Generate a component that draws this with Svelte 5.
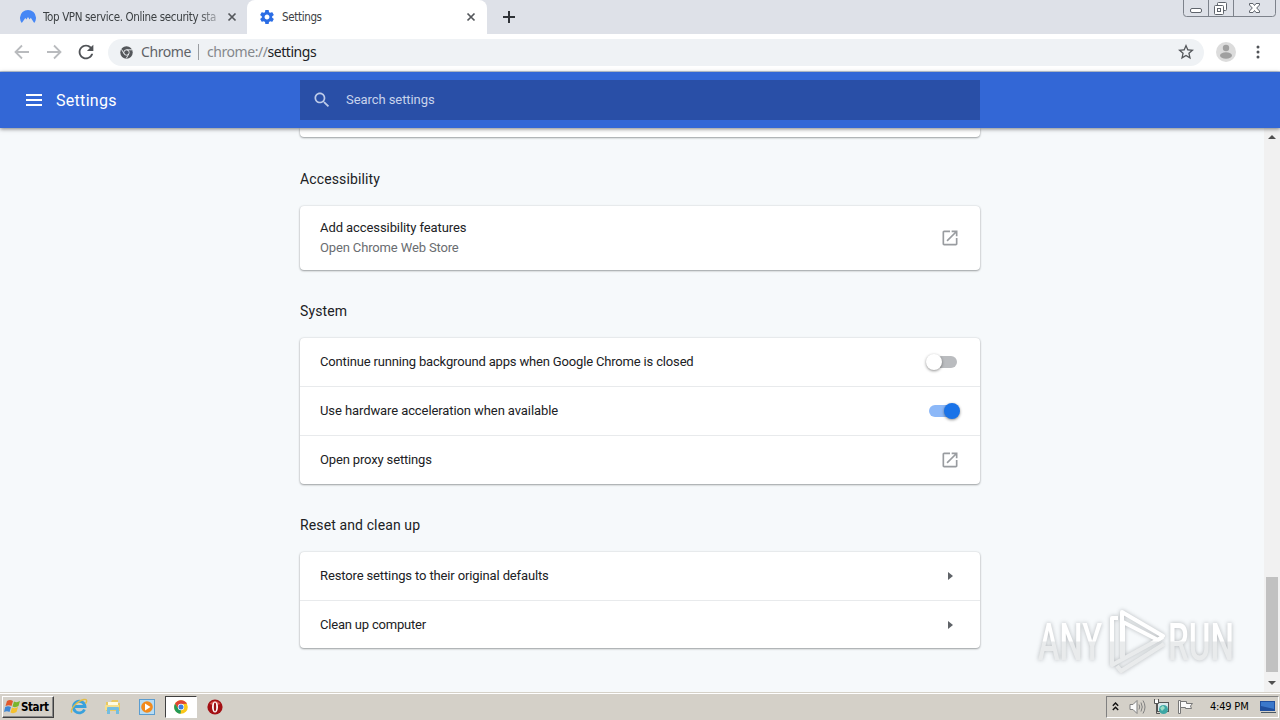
<script lang="ts">
	type Row = { label: string; sub?: string; tracking: number; control: 'link' | 'arrow' | 'off' | 'on' };
	type Section = { title: string; rows: Row[] };

	const sections: Section[] = [
		{
			title: 'Accessibility',
			rows: [
				{
					label: 'Add accessibility features',
					sub: 'Open Chrome Web Store',
					tracking: -0.08,
					control: 'link'
				}
			]
		},
		{
			title: 'System',
			rows: [
				{
					label: 'Continue running background apps when Google Chrome is closed',
					tracking: -0.165,
					control: 'off'
				},
				{ label: 'Use hardware acceleration when available', tracking: -0.09, control: 'on' },
				{ label: 'Open proxy settings', tracking: -0.15, control: 'link' }
			]
		},
		{
			title: 'Reset and clean up',
			rows: [
				{ label: 'Restore settings to their original defaults', tracking: -0.13, control: 'arrow' },
				{ label: 'Clean up computer', tracking: -0.2, control: 'arrow' }
			]
		}
	];
</script>

{#snippet closeIcon()}
	<svg class="close" width="10" height="10" viewBox="0 0 10 10">
		<path d="M1.5 1.5 8.5 8.5M8.5 1.5 1.5 8.5" stroke="#54575b" stroke-width="1.7" />
	</svg>
{/snippet}

<div class="screen">
	<div class="tabstrip">
		<div class="tab first">
			<svg width="16" height="16" viewBox="0 0 16 16">
				<path d="M1.8 14A8 8 0 1 1 14.2 14L10.8 8.8 9.6 10.6 8 8.1 6.5 10.4 5.3 8.9Z" fill="#4687f5" />
			</svg>
			<span class="tab-title fade">Top VPN service. Online security sta</span>
			{@render closeIcon()}
		</div>
		<div class="tab active">
			<svg width="16" height="16" viewBox="0.5 0.5 23 23">
				<path
					fill="#2b6de5"
					d="M19.43 12.98c.04-.32.07-.64.07-.98s-.03-.66-.07-.98l2.11-1.65c.19-.15.24-.42.12-.64l-2-3.46c-.12-.22-.39-.3-.61-.22l-2.49 1c-.52-.4-1.08-.73-1.69-.98l-.38-2.65C14.46 2.18 14.25 2 14 2h-4c-.25 0-.46.18-.49.42l-.38 2.65c-.61.25-1.17.59-1.69.98l-2.49-1c-.23-.09-.49 0-.61.22l-2 3.46c-.13.22-.07.49.12.64l2.11 1.65c-.04.32-.07.65-.07.98s.03.66.07.98l-2.11 1.65c-.19.15-.24.42-.12.64l2 3.46c.12.22.39.3.61.22l2.49-1c.52.4 1.08.73 1.69.98l.38 2.65c.03.24.24.42.49.42h4c.25 0 .46-.18.49-.42l.38-2.65c.61-.25 1.17-.59 1.69-.98l2.49 1c.23.09.49 0 .61-.22l2-3.46c.12-.22.07-.49-.12-.64l-2.11-1.65zM12 15.5c-1.93 0-3.5-1.57-3.5-3.5s1.57-3.5 3.5-3.5 3.5 1.57 3.5 3.5-1.57 3.5-3.5 3.5z"
				/>
			</svg>
			<span class="tab-title">Settings</span>
			{@render closeIcon()}
		</div>
		<svg class="plus" width="12" height="12" viewBox="0 0 12 12">
			<path d="M6 0V12M0 6H12" stroke="#2f3237" stroke-width="2" />
		</svg>
		<div class="window-buttons">
			<svg width="93" height="17" viewBox="0 0 93 17" fill="none" stroke="#5f646c">
				<path d="M.5 0V13.5Q.5 16.5 3.5 16.5H89.5Q92.5 16.5 92.5 13.5V0M25.5 0V16M50.5 0V16" stroke="#7d828b" />
				<rect x="7.5" y="8.5" width="11" height="4" rx="1.5" fill="#fff" />
				<rect x="34.5" y="2.5" width="9" height="8" rx="1" fill="#fff" />
				<rect x="31.5" y="5.5" width="9" height="9" rx="1" fill="#fff" />
				<rect x="34.5" y="8.5" width="3" height="3" />
				<path d="M66.5 3.5H70L71.5 5.5 73 3.5H76.5V5L73.7 8 76.5 11V12.5H73L71.5 10.5 70 12.5H66.5V11L69.3 8 66.5 5Z" fill="#fff" />
			</svg>
		</div>
	</div>

	<div class="toolbar">
		<svg class="nav" width="16" height="16" viewBox="0 0 16 16" fill="none" stroke="#b9bbbe" stroke-width="1.8">
			<path d="M15 8H2M8 1.5 1.5 8 8 14.5" />
		</svg>
		<svg class="nav" width="16" height="16" viewBox="0 0 16 16" fill="none" stroke="#b9bbbe" stroke-width="1.8">
			<path d="M1 8H14M8 1.5 14.5 8 8 14.5" />
		</svg>
		<svg class="nav" width="16" height="16" viewBox="3.3 3.3 17.4 17.4">
			<path
				fill="#505357"
				d="M17.65 6.35C16.2 4.9 14.21 4 12 4c-4.42 0-7.99 3.58-7.99 8s3.57 8 7.99 8c3.73 0 6.84-2.55 7.73-6h-2.08c-.82 2.33-3.04 4-5.65 4-3.31 0-6-2.69-6-6s2.69-6 6-6c1.66 0 3.14.69 4.22 1.78L13 11h7V4l-2.35 2.35z"
			/>
		</svg>
		<div class="omnibox">
			<svg width="13" height="13" viewBox="0 0 14 14">
				<circle cx="7" cy="7" r="6.7" fill="#54575b" />
				<circle cx="7" cy="7" r="2.9" fill="none" stroke="#eef1f4" stroke-width="1" />
				<path d="M7 4.1H13M4.4 8.3 1.6 3.6M9.5 8.5 6.7 13.4" stroke="#eef1f4" stroke-width="1" />
			</svg>
			<span class="origin">Chrome</span>
			<span class="bar"></span>
			<span class="url">chrome://<b>settings</b></span>
			<svg class="star" width="16" height="16" viewBox="2 2 20 20">
				<path
					fill="#54575b"
					d="M22 9.24l-7.19-.62L12 2 9.19 8.63 2 9.24l5.46 4.73L5.82 21 12 17.27 18.18 21l-1.63-7.03L22 9.24zM12 15.4l-3.76 2.27 1-4.28-3.32-2.88 4.38-.38L12 6.1l1.71 4.04 4.38.38-3.32 2.88 1 4.28L12 15.4z"
				/>
			</svg>
		</div>
		<svg class="avatar" width="20" height="20" viewBox="0 0 20 20">
			<circle cx="10" cy="10" r="10" fill="#dcdcdc" />
			<circle cx="10" cy="6" r="3.2" fill="#a0a0a0" />
			<ellipse cx="10" cy="13.5" rx="6" ry="3.2" fill="#a0a0a0" />
		</svg>
		<svg class="dots" width="4" height="14" viewBox="0 0 4 14" fill="#505357">
			<circle cx="2" cy="2" r="1.5" />
			<circle cx="2" cy="7" r="1.5" />
			<circle cx="2" cy="12" r="1.5" />
		</svg>
	</div>

	<header>
		<svg class="menu" width="16" height="12" viewBox="0 0 16 12" fill="#fff">
			<path d="M0 0H16V2H0ZM0 5H16V7H0ZM0 10H16V12H0Z" />
		</svg>
		<h1>Settings</h1>
		<div class="search">
			<svg width="20" height="20" viewBox="0 0 24 24">
				<path
					fill="#bdcbe9"
					d="M15.5 14h-.79l-.28-.27C15.41 12.59 16 11.11 16 9.5 16 5.91 13.09 3 9.5 3S3 5.91 3 9.5 5.91 16 9.5 16c1.61 0 3.09-.59 4.23-1.57l.27.28v.79l5 4.99L20.49 19l-4.99-5zm-6 0C7.01 14 5 11.99 5 9.5S7.01 5 9.5 5 14 7.01 14 9.5 11.99 14 9.5 14z"
				/>
			</svg>
			<span>Search settings</span>
		</div>
	</header>

	<div class="page">
		<main>
			<div class="card previous"></div>
			{#each sections as section}
				<section>
					<h2>{section.title}</h2>
					<div class="card">
						{#each section.rows as row}
							<div class="row" class:tall={row.sub}>
								<div class="text">
									<div class="label" style:letter-spacing="{row.tracking}px">{row.label}</div>
									{#if row.sub}<div class="sub">{row.sub}</div>{/if}
								</div>
								{#if row.control === 'link'}
									<svg class="link" width="20" height="20" viewBox="0 0 24 24">
										<path
											fill="#999ca0"
											d="M19 19H5V5h7V3H5c-1.11 0-2 .9-2 2v14c0 1.1.89 2 2 2h14c1.1 0 2-.9 2-2v-7h-2v7zM14 3v2h3.59l-9.83 9.83 1.41 1.41L19 6.41V10h2V3h-7z"
										/>
									</svg>
								{:else if row.control === 'arrow'}
									<svg class="arrow" width="5" height="8" viewBox="0 0 5 8">
										<path d="M0 0 5 4 0 8Z" fill="#5f6368" />
									</svg>
								{:else}
									<div class="toggle" class:on={row.control === 'on'}><i></i></div>
								{/if}
							</div>
						{/each}
					</div>
				</section>
			{/each}
		</main>
		<div class="scrollbar">
			<svg width="8" height="4" viewBox="0 0 8 4"><path d="M0 4 4 0 8 4Z" fill="#505050" /></svg>
			<div class="thumb"></div>
			<svg width="8" height="4" viewBox="0 0 8 4"><path d="M0 0 4 4 8 0Z" fill="#505050" /></svg>
		</div>
		<svg class="watermark" width="230" height="76" viewBox="0 0 230 76">
			<defs>
				<linearGradient id="fade" x1="0" y1="17" x2="0" y2="56" gradientUnits="userSpaceOnUse">
					<stop offset=".48" stop-color="#fff" />
					<stop offset=".52" stop-color="#e9ebec" />
				</linearGradient>
			</defs>
			<g class="letters" fill="url(#fade)">
				<text x="8" y="55" textLength="64" lengthAdjust="spacingAndGlyphs">ANY</text>
				<text x="138" y="55" textLength="66" lengthAdjust="spacingAndGlyphs">RUN</text>
			</g>
			<g fill="none" stroke="url(#fade)" stroke-width="4" stroke-linejoin="round">
				<path d="M88 13H82V60L133 32M93 18V51" />
				<path d="M92 53V7L133 31 128 35 93 17M87 61 91 66 134 39" />
			</g>
		</svg>
	</div>

	<div class="taskbar">
		<div class="start">
			<svg width="17" height="16" viewBox="0 0 17 16">
				<path d="M3 2Q6 0 9 2L7.5 7Q5 5.5 1.5 7Z" fill="#e2592b" />
				<path d="M10 2.5Q13 4 16 2L14.5 7Q11.5 9 8.5 7.5Z" fill="#79b52d" />
				<path d="M1.2 8Q4 6.5 7 8L5.5 13Q3 11.5 0 13Z" fill="#3f87d4" />
				<path d="M8 8.5Q11 10 14 8L12.5 13Q9.5 15 6.5 13.5Z" fill="#f5c12e" />
			</svg>
			<span>Start</span>
		</div>
		<div class="launchers">
			<span class="launcher">
				<svg width="18" height="17" viewBox="0 0 18 17" fill="none">
					<path d="M14.5 11.5A5.8 5.8 0 1 1 15 8.5H5" stroke="#39a1dc" stroke-width="2.8" />
					<path d="M2 14.5C-1 12 7 3 14 1.5 17 1 17.5 3 15.5 5.5" stroke="#e2bd48" stroke-width="1.4" />
				</svg>
			</span>
			<span class="launcher">
				<svg width="16" height="16" viewBox="0 0 16 16">
					<path d="M1 3H6L7 1H13V4H15V12H1Z" fill="#e9c961" />
					<path d="M3 3H13V7H3Z" fill="#fffbe0" />
					<path d="M0 6H14V11H0Z" fill="#f5df8e" />
					<path d="M2 15V9Q2 8 3 8H13Q14 8 14 9V15H11V11H5V15Z" fill="#73bde0" />
				</svg>
			</span>
			<span class="launcher">
				<svg width="16" height="16" viewBox="0 0 16 16">
					<rect x=".5" y=".5" width="15" height="15" fill="#b7dcf4" stroke="#5b9dd0" />
					<circle cx="8" cy="8" r="5.8" fill="#f28a1c" />
					<path d="M6 4.5 11.5 8 6 11.5Z" fill="#fff" />
				</svg>
			</span>
			<span class="launcher pressed">
				<svg width="14" height="14" viewBox="0 0 14 14">
					<circle cx="7" cy="7" r="6.8" fill="#fbc718" />
					<path d="M1 3.7A6.8 6.8 0 0 1 13 3.8L7 4 4.2 8.6Z" fill="#df4434" />
					<path d="M1 3.7 4.2 8.6 7 10.2 6.5 13.8A6.8 6.8 0 0 1 1 3.7Z" fill="#239957" />
					<circle cx="7" cy="7" r="3.2" fill="#fff" />
					<circle cx="7" cy="7" r="2.5" fill="#3c7de0" />
				</svg>
			</span>
			<span class="launcher">
				<svg width="16" height="16" viewBox="0 0 16 16">
					<circle cx="8" cy="8" r="7.6" fill="#a31014" />
					<path d="M2.5 5Q8-1 13.5 5 8 7 2.5 5Z" fill="#d9534e" />
					<ellipse cx="8" cy="8" rx="3" ry="5.6" fill="#fff" />
					<ellipse cx="8" cy="8" rx="1.2" ry="4.4" fill="#9c1014" />
				</svg>
			</span>
		</div>
		<div class="tray">
			<svg width="7" height="9" viewBox="0 0 7 9" fill="none" stroke="#111" stroke-width="1.4">
				<path d="M.8 3.8 3.5 1 6.2 3.8M.8 8 3.5 5.2 6.2 8" />
			</svg>
			<svg class="sound" width="17" height="16" viewBox="0 0 17 16" fill="none" stroke="#808080">
				<path d="M1 5.5H4L8 1.5V14.5L4 10.5H1Z" fill="#fafafa" />
				<path d="M10 5.5Q11.5 8 10 10.5M12 3.5Q14.5 8 12 12.5M14 1.5Q18 8 14 14.5" />
			</svg>
			<svg class="network" width="17" height="16" viewBox="0 0 17 16">
				<rect x="4.5" y="3.5" width="11" height="9" fill="#d8e8ea" stroke="#555" />
				<path d="M1.5 0V4.5H5.5V0M3.5 4.5V14.5H7" fill="none" stroke="#555" />
				<path d="M2 1H5V4H2Z" fill="#fff" />
				<circle cx="10.500" cy="10.500" r="4.500" fill="#3da7a5" />
				<path d="M7 9 10 6.5 12 9 9 12Z" fill="#9bdcc4" />
			</svg>
			<svg class="flag" width="17" height="16" viewBox="0 0 17 16" fill="#fafafa" stroke="#777">
				<path d="M1.5 1.5H3.5V14.5H1.5Z" />
				<path d="M3.5 2.500H9.500V4.500H15.500L13.500 7 14.500 9.500H8.500V8.500H3.500Z" />
			</svg>
			<span class="clock">4:49 PM</span>
			<svg class="desktop" width="16" height="14" viewBox="0 0 16 14">
				<path d="M0 1H15V11H0Z" fill="#1f4f9e" />
				<path d="M1 2H14V9L1 6Z" fill="#3a78cb" />
				<path d="M1 12H16V13H1Z" fill="#4b5965" />
			</svg>
		</div>
	</div>
</div>

<style>
	:global(body) {
		margin: 0;
		overflow: hidden;
	}

	.screen {
		display: flex;
		flex-direction: column;
		width: 1280px;
		height: 720px;
		overflow: hidden;
		background: #f6f9fb;
		color: #202124;
		font-family: Roboto, 'Liberation Sans', sans-serif;
		font-size: 13px;
	}

	svg {
		display: block;
		flex: none;
	}

	.tabstrip {
		display: flex;
		align-items: center;
		height: 34px;
		background: #dee1e8;
		font-family: 'DejaVu Sans Condensed', 'DejaVu Sans', sans-serif;
		font-size: 11.5px;
	}

	.tab {
		display: flex;
		align-items: center;
		box-sizing: border-box;
		height: 34px;
		width: 240px;
		padding: 0 11px 0 12px;
	}

	.first {
		width: 247px;
		padding: 0 10px 0 20px;
		border-radius: 0 0 8px 0;
		background: #dee1e8;
	}

	.active {
		border-radius: 8px 8px 0 0;
		background: #fff;
	}

	.tab-title {
		flex: 1;
		margin-left: 7px;
		white-space: nowrap;
		color: #3c4043;
		letter-spacing: -0.35px;
	}

	.fade {
		mask-image: linear-gradient(90deg, #000 88%, rgba(0, 0, 0, 0.3));
	}

	.close {
		margin-left: 9px;
	}

	.plus {
		margin-left: 16px;
	}

	.window-buttons {
		align-self: flex-start;
		margin-left: auto;
		padding-right: 4px;
	}

	.toolbar {
		display: flex;
		align-items: center;
		box-sizing: border-box;
		height: 38px;
		padding: 0 20px 1px 14px;
		border-bottom: 1px solid #c4cedd;
		background: #fff;
	}

	.nav {
		margin-right: 16px;
	}

	.omnibox {
		display: flex;
		flex: 1;
		align-items: center;
		box-sizing: border-box;
		height: 27px;
		margin-left: -2px;
		padding: 0 10px 0 12px;
		border-radius: 14px;
		background: #eff2f5;
		color: #5f6368;
		font-family: 'Noto Sans', 'Open Sans', sans-serif;
		font-size: 14px;
	}

	.origin,
	.url {
		padding-bottom: 2px;
	}

	.origin {
		margin-left: 8px;
		letter-spacing: -0.4px;
	}

	.bar {
		width: 1px;
		height: 16px;
		margin: 0 8px 0 7px;
		background: #9a9da1;
	}

	.url {
		color: #85888c;
		letter-spacing: -0.45px;
	}

	.url b {
		color: #202124;
		font-weight: 400;
	}

	.star {
		margin-left: auto;
	}

	.avatar {
		margin: 0 20px 0 12px;
	}

	header {
		z-index: 1;
		display: flex;
		flex: none;
		align-items: center;
		height: 56px;
		background: #3367d6;
		box-shadow: 0 1px 4px rgba(0, 0, 0, 0.5);
		color: #fff;
	}

	.menu {
		margin-left: 26px;
	}

	h1 {
		width: 244px;
		margin: 0 0 0 14px;
		font-size: 16px;
		font-weight: 400;
		letter-spacing: 0.3px;
	}

	.search {
		display: flex;
		align-items: center;
		gap: 14px;
		box-sizing: border-box;
		width: 680px;
		height: 40px;
		padding-left: 12px;
		background: #294fa7;
		color: #c8d3ec;
		letter-spacing: -0.07px;
	}

	.search span {
		padding-bottom: 2px;
	}

	.page {
		position: relative;
		display: flex;
		flex: none;
		height: 564px;
		overflow: hidden;
	}

	main {
		width: 680px;
		margin-left: 300px;
	}

	.card {
		border-radius: 4px;
		background: #fff;
		box-shadow:
			0 1px 2px rgba(60, 64, 67, 0.45),
			0 0 2px rgba(60, 64, 67, 0.2);
	}

	.previous {
		height: 9px;
		margin-bottom: 1px;
		border-radius: 0 0 4px 4px;
	}

	h2 {
		box-sizing: border-box;
		height: 68px;
		margin: 0;
		padding-top: 31px;
		font-size: 14px;
		font-weight: 400;
		line-height: 20px;
		letter-spacing: 0.12px;
	}

	.row {
		display: flex;
		align-items: center;
		justify-content: space-between;
		height: 48px;
		padding: 0 20px;
	}

	.row + .row {
		border-top: 1px solid #e8eaec;
	}

	.tall {
		height: 64px;
	}

	section:last-child .row:last-child {
		height: 47px;
	}

	.text {
		line-height: 20px;
	}

	.sub {
		color: #6a6d71;
		letter-spacing: -0.14px;
	}

	.arrow {
		margin-right: 7px;
	}

	.toggle {
		display: flex;
		align-items: center;
		width: 28px;
		height: 12px;
		margin-right: 3px;
		border-radius: 6px;
		background: #babcbf;
	}

	.toggle i {
		width: 16px;
		height: 16px;
		margin-left: -3px;
		flex: none;
		border-radius: 50%;
		background: #fff;
		box-shadow: 0 1px 3px rgba(0, 0, 0, 0.45);
	}

	.toggle.on {
		background: #8cb8f8;
	}

	.toggle.on i {
		margin-left: 15px;
		background: #1a73e8;
	}

	.scrollbar {
		display: flex;
		flex-direction: column;
		align-items: center;
		justify-content: space-between;
		box-sizing: border-box;
		width: 16px;
		margin-left: auto;
		padding: 7px 0;
		background: #f1f1f1;
	}

	.thumb {
		width: 12px;
		height: 95px;
		margin: auto 0 9px;
		background: #c1c1c1;
	}

	.watermark {
		position: absolute;
		top: 477px;
		left: 1030px;
		filter: drop-shadow(0 0 2px rgba(90, 95, 100, 0.42));
		font-size: 51px;
	}

	.letters {
		font-weight: 500;
	}

	.taskbar {
		display: flex;
		align-items: center;
		box-sizing: border-box;
		height: 28px;
		padding: 2px 0 2px 2px;
		border-top: 1px solid #d5d1c8;
		background: #d4d0c8;
		box-shadow: inset 0 1px #fff;
		color: #000;
		font-family: 'DejaVu Sans Condensed', 'DejaVu Sans', sans-serif;
		font-size: 11px;
	}

	.start {
		display: flex;
		align-items: center;
		box-sizing: border-box;
		width: 52px;
		height: 22px;
		padding-left: 1px;
		border: 1px solid;
		border-color: #fff #404040 #404040 #fff;
		box-shadow: inset -1px -1px #888;
		font-size: 11.5px;
		font-weight: 700;
		letter-spacing: -0.4px;
	}

	.launchers {
		display: flex;
		margin-left: 9px;
		gap: 2px;
	}

	.launcher {
		display: flex;
		align-items: center;
		justify-content: center;
		box-sizing: border-box;
		width: 32px;
		height: 22px;
	}

	.pressed {
		border: 1px solid;
		border-color: #404040 #fff #fff #404040;
		background: #fff;
	}

	.tray {
		display: flex;
		align-items: center;
		box-sizing: border-box;
		width: 173px;
		height: 22px;
		margin-left: auto;
		margin-right: 1px;
		padding-left: 5px;
		border: 1px solid;
		border-color: #808080 #fff #fff #808080;
	}

	.sound {
		margin-left: 10px;
	}

	.network {
		margin-left: 7px;
	}

	.flag {
		margin-left: 7px;
	}

	.clock {
		width: 40px;
		margin-left: 16px;
		white-space: nowrap;
		letter-spacing: -0.2px;
	}

	.desktop {
		margin-left: auto;
		margin-right: 2px;
	}
</style>
